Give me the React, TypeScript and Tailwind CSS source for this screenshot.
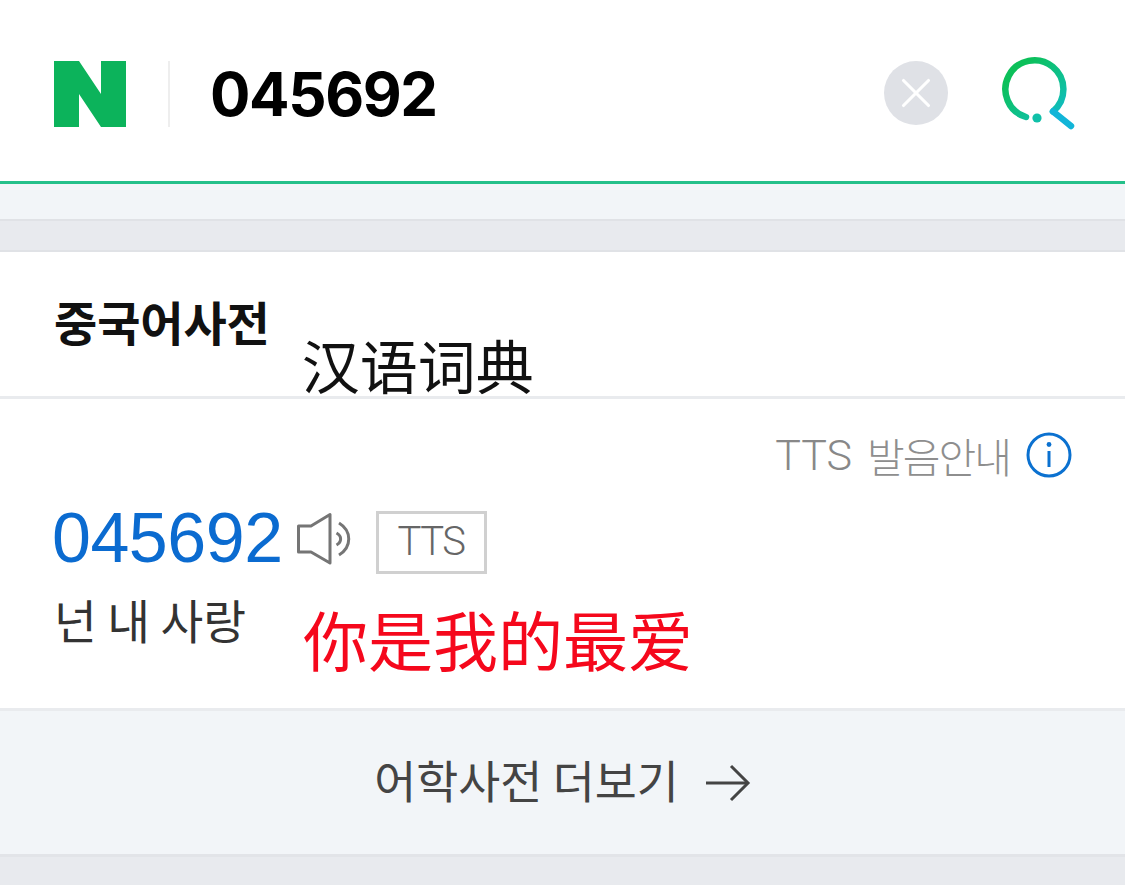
import { X } from 'lucide-react';

const sans = "font-['Liberation_Sans','Noto_Sans_CJK_KR',sans-serif]";
const cjk = "font-['Noto_Sans_CJK_SC',sans-serif]";
const kr = "font-['Noto_Sans_CJK_KR',sans-serif]";
const thin = "font-['Roboto',sans-serif] font-light";

function NaverLogo() {
  return (
    <svg className="w-[72px] h-[66px] shrink-0" viewBox="0 0 72 66">
      <path d="M0 0H25L47 33V0H72V66H47L25 33V66H0Z" fill="#0cb35b" />
    </svg>
  );
}

function SearchIcon() {
  return (
    <svg className="w-[76px] h-[76px] shrink-0" viewBox="0 0 76 76" fill="none">
      <defs>
        <linearGradient id="lens" x1="0" y1="0" x2="1" y2="1">
          <stop offset="0.2" stopColor="#0cc05a" />
          <stop offset="0.75" stopColor="#0fc0a0" />
          <stop offset="1" stopColor="#10b8d0" />
        </linearGradient>
      </defs>
      <path d="M26 61A29 29 0 1 1 53 55.5" stroke="url(#lens)" strokeWidth="6.5" strokeLinecap="round" />
      <path d="M53 55.5L71 70" stroke="#12b5d8" strokeWidth="6.5" strokeLinecap="round" />
      <circle cx="37" cy="62" r="4.6" fill="#10c0a8" />
    </svg>
  );
}

function SpeakerIcon() {
  return (
    <svg className="w-[56px] h-[54px] shrink-0" viewBox="0 0 56 54" fill="none" stroke="#757575" strokeWidth="3">
      <path d="M1.5 15H14L33 3.5V52L14 41H1.5Z" strokeLinejoin="round" />
      <path d="M39.5 22C45 25 45 31 39.5 34" />
      <path d="M42 12C55 20 55 36 42 44" />
    </svg>
  );
}

function InfoIcon() {
  return (
    <svg className="w-[46px] h-[46px] shrink-0" viewBox="0 0 46 46" fill="none">
      <circle cx="23" cy="23" r="21" stroke="#0b71d0" strokeWidth="3" />
      <circle cx="23" cy="12.5" r="2.4" fill="#0b71d0" />
      <path d="M23 19V35" stroke="#0b71d0" strokeWidth="3" />
    </svg>
  );
}

function ArrowIcon() {
  return (
    <svg className="w-[46px] h-[38px] shrink-0" viewBox="0 0 46 38" fill="none" stroke="#444" strokeWidth="3">
      <path d="M1 19H43" />
      <path d="M26 2L43 19L26 36" />
    </svg>
  );
}

export default function App() {
  return (
    <div className={`w-[1125px] h-[885px] overflow-hidden bg-[#e8eaee] ${sans}`}>
      <header className="h-[184px] bg-white border-b-[3px] border-[#25c08a] flex items-center pl-[54px] pr-[49px] pt-[7px]">
        <NaverLogo />
        <div className="w-[2px] h-[66px] bg-[#eeeeee] ml-[42px]" />
        <div className="ml-[40px] text-[60px] font-bold text-black leading-none font-['Inter',sans-serif] tracking-[-1.4px]">
          045692
        </div>
        <div className="ml-auto mb-[3px] w-[64px] h-[64px] rounded-full bg-[#dfe1e6] flex items-center justify-center">
          <X className="w-[50px] h-[50px] text-white" strokeWidth={1.5} />
        </div>
        <div className="ml-[52px]">
          <SearchIcon />
        </div>
      </header>

      <div className="h-[37px] bg-[#f2f5f8] border-b-2 border-[#e0e2e6]" />

      <div className="h-[31px] border-b-2 border-[#e0e2e6]" />

      <section className="h-[147px] bg-white border-b-[3px] border-[#e9ebee] flex pl-[54px]">
        <h2 className={`mt-[39px] text-[47px] leading-[60px] font-bold text-[#111] tracking-[-0.1px] ${kr}`}>중국어사전</h2>
        <div className={`ml-[32px] mt-[72px] text-[58px] leading-[80px] text-[#111] h-[60px] ${cjk}`}>汉语词典</div>
      </section>

      <section className="h-[312px] bg-white border-b-[3px] border-[#e9ebee] pl-[52px] pr-[53px]">
        <div className="pt-[33px] flex items-center justify-end">
          <span className={`text-[43px] leading-[46px] text-[#888] ${thin}`}>TTS</span>
          <span className={`ml-[15px] text-[41px] leading-[46px] text-[#8e8e8e] tracking-[-2px] font-light ${kr}`}>발음안내</span>
          <span className="ml-[16px]">
            <InfoIcon />
          </span>
        </div>
        <div className="mt-[23px] h-[74px] flex items-center">
          <span className="text-[70px] leading-[74px] text-[#0b6bd0] tracking-[-0.5px]">045692</span>
          <span className="ml-[14px]">
            <SpeakerIcon />
          </span>
          <span
            className={`ml-[23px] mt-[8px] w-[111px] h-[63px] border-[3px] border-[#d0d0d0] flex items-center justify-center text-[40px] text-[#666] tracking-[-1.5px] ${thin}`}
          >
            TTS
          </span>
        </div>
        <div className="mt-[11px] flex items-start">
          <span className={`mt-[3px] ml-[2px] text-[46.5px] leading-[60px] text-[#333] ${kr}`}>넌 내 사랑</span>
          <span className={`ml-[57px] mt-[12px] text-[65px] leading-[80px] text-[#f5081c] ${cjk}`}>你是我的最爱</span>
        </div>
      </section>

      <div className="h-[146px] bg-[#f2f5f8] border-b-[3px] border-[#e2e4e8] flex items-center justify-center">
        <span className={`mb-[6px] text-[45.7px] leading-none text-[#444] ${kr}`}>어학사전 더보기</span>
        <span className="ml-[26px]">
          <ArrowIcon />
        </span>
      </div>
    </div>
  );
}
